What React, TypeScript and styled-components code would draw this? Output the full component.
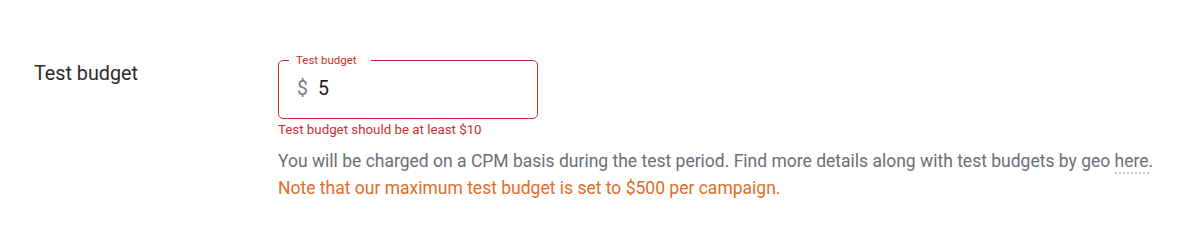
import React from "react";
import styled, { createGlobalStyle } from "styled-components";

const Global = createGlobalStyle`
  html, body { margin: 0; padding: 0; background: #fff; }
  body { font-family: Roboto, "Noto Sans", sans-serif; }
`;

const Page = styled.div`
  padding: 60px 0 0 34px;
  display: flex;
  align-items: flex-start;
`;

const Label = styled.div`
  width: 244px;
  flex: none;
  padding-top: 2px;
  font-size: 19.75px;
  line-height: 24px;
  color: #2b2b2b;
`;

const Column = styled.div`
  display: flex;
  flex-direction: column;
`;

const Box = styled.div`
  position: relative;
  width: 260px;
  height: 59px;
  box-sizing: border-box;
  border: 1px solid #c9302c;
  border-radius: 5px;
  padding: 0 0 2px 18px;
  display: flex;
  align-items: center;
  gap: 10px;
`;

const Legend = styled.span`
  position: absolute;
  left: 10px;
  top: -8px;
  padding: 0 14px 0 7px;
  background: #fff;
  font-size: 11.5px;
  line-height: 14px;
  color: #c9302c;
`;

const Prefix = styled.span`
  font-size: 19.5px;
  color: #7a7a7a;
`;

const Value = styled.span`
  font-size: 19.5px;
  color: #1f1f1f;
`;

const Error = styled.div`
  margin-top: 3px;
  font-size: 13.3px;
  line-height: 16px;
  color: #c9302c;
`;

const Help = styled.div`
  margin-top: 10px;
  font-size: 17.5px;
  line-height: 27px;
  color: #6b6f76;
`;

const Link = styled.span`
  border-bottom: 2px dotted #c4c8cc;
  padding-bottom: 1px;
`;

const Note = styled.div`
  color: #e06d28;
`;

export default function App() {
  return (
    <>
      <Global />
      <Page>
        <Label>Test budget</Label>
        <Column>
          <Box>
            <Legend>Test budget</Legend>
            <Prefix>$</Prefix>
            <Value>5</Value>
          </Box>
          <Error>Test budget should be at least $10</Error>
          <Help>
            <div>
              You will be charged on a CPM basis during the test period. Find more details along with test budgets by geo <Link>here</Link>.
            </div>
            <Note>Note that our maximum test budget is set to $500 per campaign.</Note>
          </Help>
        </Column>
      </Page>
    </>
  );
}
